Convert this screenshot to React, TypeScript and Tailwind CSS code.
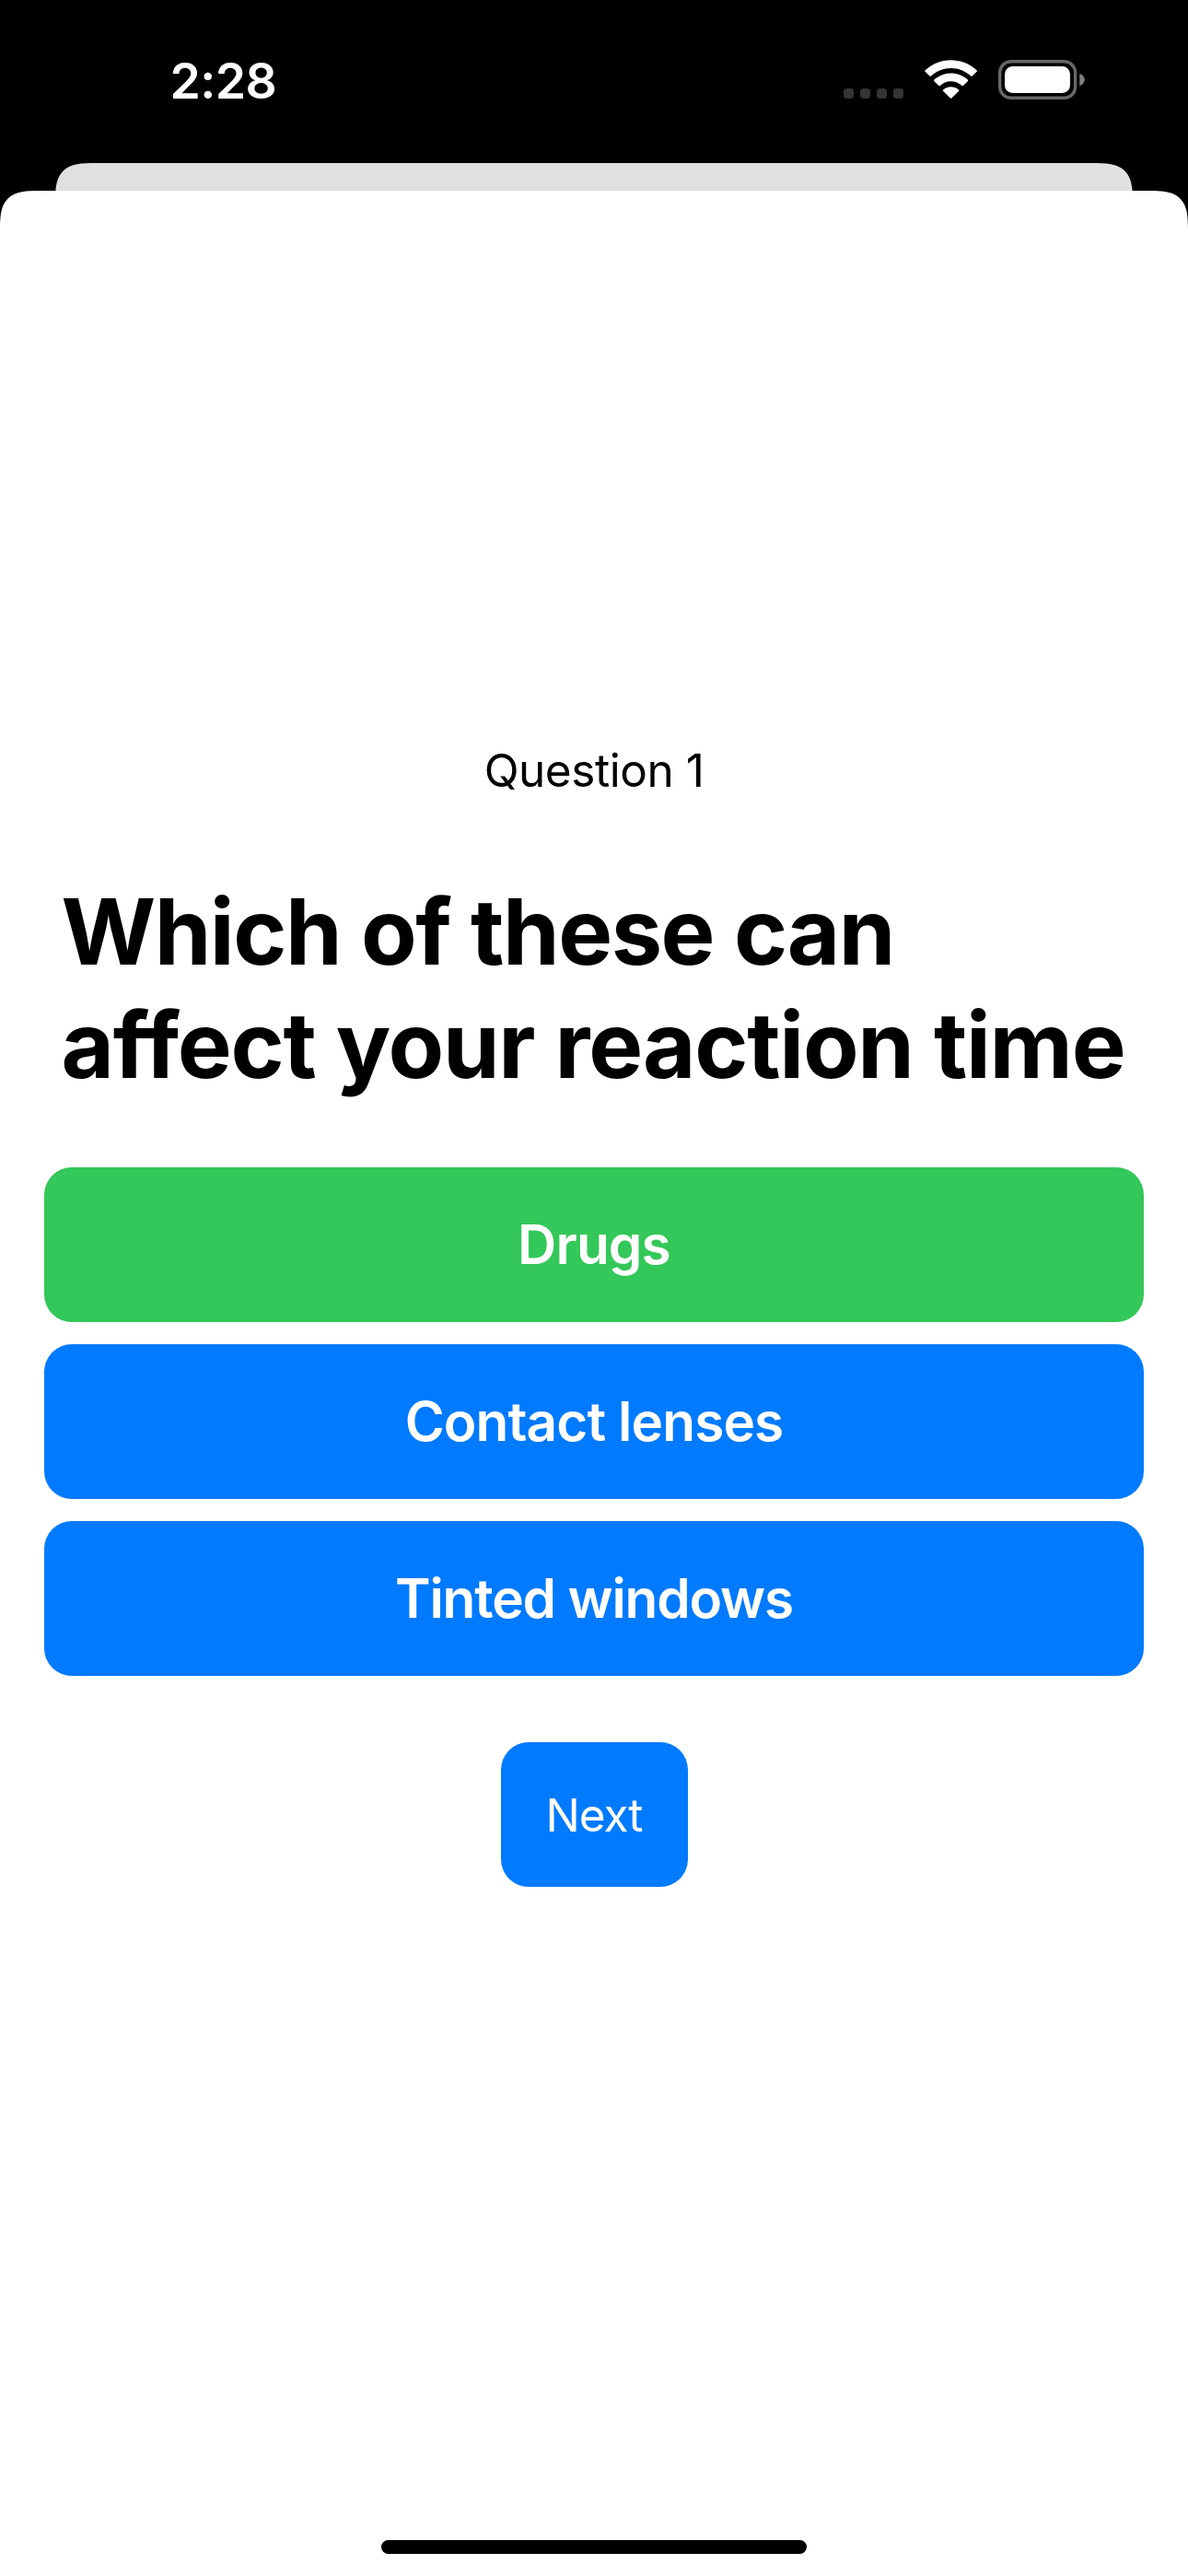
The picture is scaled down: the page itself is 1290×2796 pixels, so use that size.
type AnswerProps = { label: string; correct?: boolean; tracking: string };

function SignalDots() {
  return (
    <div className="flex gap-[7px]">
      {[0, 1, 2, 3].map((i) => (
        <span key={i} className="size-[11px] rounded-[3.5px] bg-[#343434]" />
      ))}
    </div>
  );
}

function WifiIcon() {
  return (
    <svg width="58" height="42" viewBox="0 0 58 42" fill="#fff" aria-hidden="true">
      <path d="M28.6 8.9C36.9 8.9 44.5 12.1 50.2 17.4C50.7 17.9 51.3 17.9 51.7 17.4L56.6 12.8C57.1 12.3 57.1 11.7 56.6 11.2C41.1 -3.4 16.1 -3.4 0.6 11.2C0.1 11.7 0.1 12.3 0.6 12.8L5.5 17.4C5.9 17.9 6.5 17.9 7 17.4C12.7 12.1 20.3 8.9 28.6 8.9Z" />
      <path d="M28.6 23.2C33.1 23.2 37.2 24.9 40.4 27.9C40.9 28.3 41.4 28.3 41.9 27.9L46.8 23.2C47.3 22.7 47.3 22 46.8 21.5C36.6 12.3 20.6 12.3 10.4 21.5C9.9 22 9.9 22.7 10.4 23.2L15.3 27.9C15.8 28.3 16.3 28.3 16.8 27.9C20 24.9 24.1 23.2 28.6 23.2Z" />
      <path d="M37 34C37.5 33.5 37.5 32.8 37 32.4C32.2 28.3 25 28.3 20.2 32.4C19.7 32.8 19.7 33.5 20.2 34L27.9 41.4C28.3 41.8 28.9 41.8 29.3 41.4Z" />
    </svg>
  );
}

function BatteryIcon() {
  return (
    <svg width="95" height="43" viewBox="0 0 95 43" aria-hidden="true">
      <rect x="1.7" y="1.7" width="81.9" height="39.6" rx="12" fill="none" stroke="#666" strokeWidth="3.4" />
      <rect x="7" y="7" width="71" height="29" rx="8.5" fill="#fff" />
      <path d="M88.3 14.8C91.6 16.2 93.8 18.6 93.8 21.5C93.8 24.4 91.6 26.9 88.3 28.3Z" fill="#808080" />
    </svg>
  );
}

function StatusBar() {
  return (
    <header className="flex h-[177px] justify-between pt-[55px] pr-[111px] pl-[184.5px]">
      <time className="text-[53.5px] leading-[65px] font-semibold tracking-[-0.57px] text-white">2:28</time>
      <div className="flex pt-[10px]">
        <div className="pt-[31px]">
          <SignalDots />
        </div>
        <div className="ml-[23px]">
          <WifiIcon />
        </div>
        <div className="ml-[22px]">
          <BatteryIcon />
        </div>
      </div>
    </header>
  );
}

function Answer({ label, correct, tracking }: AnswerProps) {
  return (
    <button
      className={`flex h-[168px] w-full items-center justify-center rounded-[30px] text-[58.5px] leading-none font-semibold text-white ${
        correct ? "bg-[#34c759]" : "bg-[#007aff]"
      } ${tracking}`}
    >
      {label}
    </button>
  );
}

export default function App() {
  return (
    <div className="flex h-[2796px] w-[1290px] flex-col overflow-hidden bg-black font-['Inter',sans-serif]">
      <StatusBar />
      <div className="mx-[60px] h-[30px] shrink-0 overflow-hidden">
        <div className="h-[90px] rounded-t-[44px] bg-[#e0e0e0] [corner-shape:superellipse(1.67)]" />
      </div>
      <main className="flex flex-1 flex-col items-center rounded-t-[44px] bg-white px-12 pt-[599px] text-black [corner-shape:superellipse(1.67)]">
        <p className="text-[49.5px] leading-[60px] tracking-[-0.46px]">Question 1</p>
        <h1 className="mt-[84px] w-full pl-[18.5px] text-[99px] leading-[123px] font-bold whitespace-nowrap">
          <span className="block tracking-[-1.5px]">Which of these can</span>
          <span className="block tracking-[-1.23px]">affect your reaction time</span>
        </h1>
        <div className="mt-[71px] flex w-full flex-col gap-6">
          <Answer label="Drugs" correct tracking="tracking-[-0.85px]" />
          <Answer label="Contact lenses" tracking="tracking-[-0.88px]" />
          <Answer label="Tinted windows" tracking="tracking-[-1.17px]" />
        </div>
        <button className="mt-[72px] flex h-[157px] w-[203px] items-center justify-center rounded-[30px] bg-[#007aff] pt-px text-[49.5px] leading-[60px] tracking-[-1.1px] text-white">
          Next
        </button>
        <div className="mt-auto mb-6 h-[15px] w-[462px] rounded-full bg-black" />
      </main>
    </div>
  );
}
